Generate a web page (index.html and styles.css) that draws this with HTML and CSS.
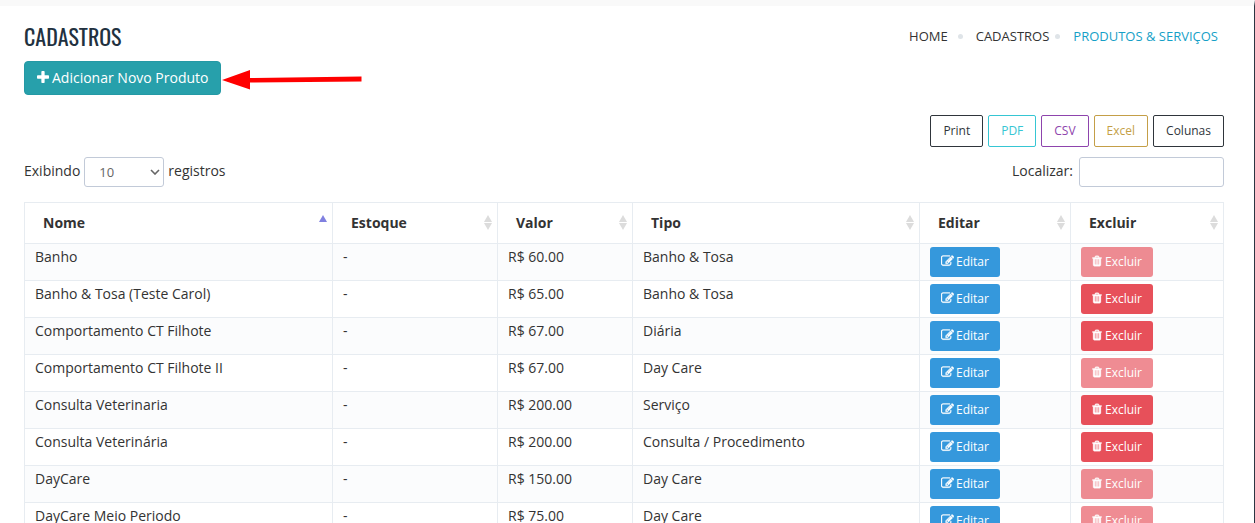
FILE: index.html
```html
<!DOCTYPE html>
<html lang="pt-BR">
<head>
<meta charset="utf-8">
<title>Produtos &amp; Serviços</title>
<link rel="stylesheet" href="styles.css">
</head>
<body>
<svg class="sprite" aria-hidden="true">
  <symbol id="plus" viewBox="192 128 1408 1408"><path d="M1600 736v192q0 40-28 68t-68 28h-416v416q0 40-28 68t-68 28h-192q-40 0-68-28t-28-68v-416h-416q-40 0-68-28t-28-68v-192q0-40 28-68t68-28h416v-416q0-40 28-68t68-28h192q40 0 68 28t28 68v416h416q40 0 68 28t28 68z"/></symbol>
  <symbol id="edit" viewBox="0 100 1792 1592"><path d="M888 1184l116-116-152-152-116 116v56h96v96h56zm440-720q-16-16-33 1l-350 350q-17 17-1 33t33-1l350-350q17-17 1-33zm80 594v190q0 119-84.500 203.500t-203.500 84.500h-832q-119 0-203.500-84.500t-84.500-203.500v-832q0-119 84.500-203.500t203.500-84.500h832q63 0 117 25 15 7 18 23 3 17-9 29l-49 49q-14 14-32 8-23-6-45-6h-832q-66 0-113 47t-47 113v832q0 66 47 113t113 47h832q66 0 113-47t47-113v-126q0-13 9-22l64-64q15-15 35-7t20 29zm-96-738l288 288-672 672h-288v-288zm444 132l-92 92-288-288 92-92q28-28 68-28t68 28l152 152q28 28 28 68t-28 68z"/></symbol>
  <symbol id="trash" viewBox="192 0 1408 1792"><path d="M704 1376v-704q0-14-9-23t-23-9h-64q-14 0-23 9t-9 23v704q0 14 9 23t23 9h64q14 0 23-9t9-23zm256 0v-704q0-14-9-23t-23-9h-64q-14 0-23 9t-9 23v704q0 14 9 23t23 9h64q14 0 23-9t9-23zm256 0v-704q0-14-9-23t-23-9h-64q-14 0-23 9t-9 23v704q0 14 9 23t23 9h64q14 0 23-9t9-23zm-544-992h448l-48-117q-7-9-17-11h-317q-10 2-17 11zm928 32v64q0 14-9 23t-23 9h-96v948q0 83-47 143.500t-113 60.500h-832q-66 0-113-58.500t-47-141.500v-952h-96q-14 0-23-9t-9-23v-64q0-14 9-23t23-9h309l70-167q15-37 54-63t79-26h320q40 0 79 26t54 63l70 167h309q14 0 23 9t9 23z"/></symbol>
</svg>
<main class="page">
  <header class="page-head">
    <h1 class="title">CADASTROS</h1>
    <nav class="crumbs" aria-label="Navegação">
      <a href="#" class="home">HOME</a><span class="dot"></span>
      <a href="#">CADASTROS</a><span class="dot"></span>
      <a href="#" class="current">PRODUTOS &amp; SERVIÇOS</a>
    </nav>
  </header>
  <div class="actions">
    <button class="add" type="button"><svg class="icon plus"><use href="#plus"/></svg>Adicionar Novo Produto</button>
    <svg class="arrow" viewBox="0 0 140 24" aria-hidden="true"><path fill="#f00" d="M0 14 28 4V12L139.500 10.500V15.500L28 16.500V23.500Z"/></svg>
  </div>
  <div class="exports">
    <button type="button" class="export">Print</button>
    <button type="button" class="export export-pdf">PDF</button>
    <button type="button" class="export export-csv">CSV</button>
    <button type="button" class="export export-excel">Excel</button>
    <button type="button" class="export">Colunas</button>
  </div>
  <div class="filters">
    <label class="length">Exibindo
      <span class="select-wrap"><select class="field select"><option>10</option><option>25</option><option>50</option></select><svg class="chevron" viewBox="0 0 10 6"><path d="M1 1l4 4 4-4"/></svg></span>
      registros</label>
    <label class="search">Localizar: <input class="field search-input" type="search"></label>
  </div>
  <table class="grid">
    <colgroup><col class="c-name"><col class="c-stock"><col class="c-price"><col class="c-type"><col class="c-edit"><col class="c-del"></colgroup>
    <thead>
      <tr>
        <th aria-sort="ascending"><div class="head">Nome<span class="sort sort-asc"></span></div></th>
        <th><div class="head">Estoque<span class="sort"></span></div></th>
        <th><div class="head">Valor<span class="sort"></span></div></th>
        <th><div class="head">Tipo<span class="sort"></span></div></th>
        <th><div class="head">Editar<span class="sort"></span></div></th>
        <th><div class="head">Excluir<span class="sort"></span></div></th>
      </tr>
    </thead>
    <tbody>
      <tr><td>Banho</td><td>-</td><td>R$ 60.00</td><td>Banho &amp; Tosa</td><td><button type="button" class="btn edit"><svg class="icon"><use href="#edit"/></svg>Editar</button></td><td><button type="button" class="btn del" disabled><svg class="icon trash"><use href="#trash"/></svg>Excluir</button></td></tr>
      <tr><td>Banho &amp; Tosa (Teste Carol)</td><td>-</td><td>R$ 65.00</td><td>Banho &amp; Tosa</td><td><button type="button" class="btn edit"><svg class="icon"><use href="#edit"/></svg>Editar</button></td><td><button type="button" class="btn del"><svg class="icon trash"><use href="#trash"/></svg>Excluir</button></td></tr>
      <tr><td>Comportamento CT Filhote</td><td>-</td><td>R$ 67.00</td><td>Diária</td><td><button type="button" class="btn edit"><svg class="icon"><use href="#edit"/></svg>Editar</button></td><td><button type="button" class="btn del"><svg class="icon trash"><use href="#trash"/></svg>Excluir</button></td></tr>
      <tr><td>Comportamento CT Filhote II</td><td>-</td><td>R$ 67.00</td><td>Day Care</td><td><button type="button" class="btn edit"><svg class="icon"><use href="#edit"/></svg>Editar</button></td><td><button type="button" class="btn del" disabled><svg class="icon trash"><use href="#trash"/></svg>Excluir</button></td></tr>
      <tr><td>Consulta Veterinaria</td><td>-</td><td>R$ 200.00</td><td>Serviço</td><td><button type="button" class="btn edit"><svg class="icon"><use href="#edit"/></svg>Editar</button></td><td><button type="button" class="btn del"><svg class="icon trash"><use href="#trash"/></svg>Excluir</button></td></tr>
      <tr><td>Consulta Veterinária</td><td>-</td><td>R$ 200.00</td><td>Consulta / Procedimento</td><td><button type="button" class="btn edit"><svg class="icon"><use href="#edit"/></svg>Editar</button></td><td><button type="button" class="btn del"><svg class="icon trash"><use href="#trash"/></svg>Excluir</button></td></tr>
      <tr><td>DayCare</td><td>-</td><td>R$ 150.00</td><td>Day Care</td><td><button type="button" class="btn edit"><svg class="icon"><use href="#edit"/></svg>Editar</button></td><td><button type="button" class="btn del" disabled><svg class="icon trash"><use href="#trash"/></svg>Excluir</button></td></tr>
      <tr><td>DayCare Meio Periodo</td><td>-</td><td>R$ 75.00</td><td>Day Care</td><td><button type="button" class="btn edit"><svg class="icon"><use href="#edit"/></svg>Editar</button></td><td><button type="button" class="btn del" disabled><svg class="icon trash"><use href="#trash"/></svg>Excluir</button></td></tr>
    </tbody>
  </table>
</main>
</body>
</html>
```
FILE: styles.css
```css
* { box-sizing: border-box; }
html { overflow: hidden; }
body {
  margin: 0;
  font: 14px/20px "Open Sans", sans-serif;
  color: #333;
  background: #fff;
}
button, input, select { font-family: inherit; }
button { cursor: pointer; }
.sprite { display: none; }
.page {
  min-height: 100vh;
  padding: 16px 30px 20px 24px;
  border-top: 6px solid #f9f9f9;
  border-right: 1px solid #2b3643;
}
.icon { width: 13px; height: 12px; fill: currentColor; stroke: currentColor; stroke-width: 50; flex: none; }
.page-head { display: flex; justify-content: space-between; align-items: center; height: 28px; }
.title {
  margin: 0;
  font: 400 22px/28px Oswald, "Open Sans Condensed", "Roboto Condensed", "Liberation Sans Narrow", sans-serif;
  color: #22313f;
}
.crumbs { display: flex; align-items: center; padding-right: 6px; font-size: 13px; }
.crumbs a { color: #333; text-decoration: none; }
.crumbs .current { color: #169fc7; }
.home { margin-right: 4px; }
.dot { width: 5px; height: 5px; margin: 0 13px 0 6px; border-radius: 50%; background: #dfe4e8; }
.actions { display: flex; align-items: center; gap: 1px; margin-top: 11px; }
.add {
  display: flex;
  align-items: center;
  gap: 3px;
  height: 34px;
  padding: 0 12px 2px;
  border: 1px solid #2499a5;
  border-radius: 4px;
  background: #27a0ab;
  color: #fff;
  font-size: 14px;
}
.arrow { width: 140px; height: 24px; }
.exports { display: flex; justify-content: flex-end; gap: 5px; margin-top: 20px; }
.export {
  height: 32px;
  padding: 0 12px 2px;
  border: 1px solid #2f353b;
  border-radius: 2px;
  background: #fff;
  color: #2f353b;
  font-size: 12px;
}
.export-pdf { color: #36c6d3; border-color: #36c6d3; }
.export-csv { color: #8e44ad; border-color: #8e44ad; }
.export-excel { color: #c49f47; border-color: #c49f47; }
.filters { display: flex; justify-content: space-between; margin-top: 10px; line-height: 28px; }
.length, .search { display: flex; align-items: flex-start; gap: 4px; }
.search { gap: 6px; }
.field {
  height: 30px;
  border: 1px solid #c2cad8;
  border-radius: 3px;
  background: #fff;
  color: #666;
  font-size: 13px;
}
.select-wrap { position: relative; }
.select { display: block; width: 80px; padding: 0 14px; appearance: none; }
.chevron { position: absolute; right: 4px; top: 12px; width: 10px; height: 6px; fill: none; stroke: #666; stroke-width: 1.6; pointer-events: none; }
.search-input { width: 145px; padding: 4px 10px; }
.grid { width: 100%; margin-top: 15px; table-layout: fixed; border-collapse: collapse; }
.c-stock { width: 165px; }
.c-price { width: 135px; }
.c-type { width: 287px; }
.c-edit { width: 151px; }
.c-del { width: 153px; }
.grid th, .grid td { border: 1px solid #e7ecf1; text-align: left; vertical-align: top; }
.grid th { padding: 10px 5px 10px 18px; font-weight: 700; }
.grid td { padding: 3px 10px; }
.grid tbody tr:nth-child(odd) { background: #fbfcfd; }
.head { display: flex; justify-content: space-between; align-items: center; }
.sort { display: grid; gap: 1px; padding-bottom: 2px; }
.sort::before, .sort::after { content: ""; border: 4px solid transparent; }
.sort::before { border-top: 0; border-bottom: 7px solid #dcdcdc; }
.sort::after { border-bottom: 0; border-top: 7px solid #dcdcdc; }
.sort-asc::before { border-bottom-color: #8080e0; }
.sort-asc::after { border-top-color: transparent; }
.btn {
  display: flex;
  align-items: center;
  gap: 2px;
  height: 30px;
  padding: 0 11px 2px;
  border: 0;
  border-radius: 3px;
  color: #fff;
  font-size: 12px;
}
.edit { background: #3598dc; }
.del { background: #e7505a; gap: 3px; }
.del:disabled { opacity: .65; }
.plus { width: 12px; stroke: none; }
.trash { width: 10px; }
```
